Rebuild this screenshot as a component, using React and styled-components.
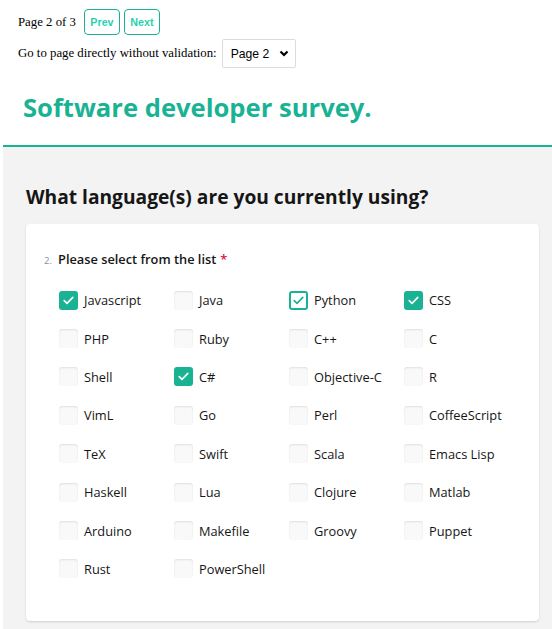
import React from 'react';
import styled, { createGlobalStyle } from 'styled-components';

const GREEN = '#19b394';

const languages = [
  { name: 'Javascript', state: 'checked' },
  { name: 'Java' },
  { name: 'Python', state: 'focused' },
  { name: 'CSS', state: 'checked' },
  { name: 'PHP' },
  { name: 'Ruby' },
  { name: 'C++' },
  { name: 'C' },
  { name: 'Shell' },
  { name: 'C#', state: 'checked' },
  { name: 'Objective-C' },
  { name: 'R' },
  { name: 'VimL' },
  { name: 'Go' },
  { name: 'Perl' },
  { name: 'CoffeeScript' },
  { name: 'TeX' },
  { name: 'Swift' },
  { name: 'Scala' },
  { name: 'Emacs Lisp' },
  { name: 'Haskell' },
  { name: 'Lua' },
  { name: 'Clojure' },
  { name: 'Matlab' },
  { name: 'Arduino' },
  { name: 'Makefile' },
  { name: 'Groovy' },
  { name: 'Puppet' },
  { name: 'Rust' },
  { name: 'PowerShell' },
];

const GlobalStyle = createGlobalStyle`
  body {
    margin: 0;
    background: #fff;
    font-family: "Liberation Serif", "Times New Roman", serif;
    font-size: 12.8px;
  }
`;

const Pager = styled.div`
  padding: 9px 0 0 18px;
`;

const PagerRow = styled.div`
  display: flex;
  align-items: center;
  gap: ${(p) => p.gap || 4}px;
  margin-top: ${(p) => p.top || 0}px;
  color: #000;
`;

const PagerLabel = styled.span`
  margin-right: ${(p) => p.space || 0}px;
`;

const NavButton = styled.button`
  width: 36px;
  height: 26px;
  padding: 0;
  background: #fff;
  border: 1px solid ${GREEN};
  border-radius: 4px;
  color: #1fd3b0;
  font-family: "Liberation Sans", Arial, sans-serif;
  font-weight: bold;
  font-size: 10.7px;
`;

const SelectBox = styled.div`
  width: 74px;
  height: 29px;
  box-sizing: border-box;
  border: 1px solid #dcdcdc;
  border-radius: 2px;
  display: flex;
  align-items: center;
  justify-content: space-between;
  padding: 0 6px 0 8px;
  font-family: "Liberation Sans", Arial, sans-serif;
  font-size: 12.2px;
  color: #000;
`;

const Survey = styled.div`
  margin: 3px 0 0 3px;
  font-family: "Open Sans", sans-serif;
`;

const Header = styled.div`
  padding: 21px 20px 21px;
  border-bottom: 2px solid ${GREEN};
  background: #fff;
`;

const Title = styled.h1`
  margin: 0;
  font-size: 25.6px;
  line-height: 32px;
  font-weight: 700;
  color: ${GREEN};
`;

const Body = styled.div`
  background: #f3f3f3;
  padding: 38px 13px 9px 23px;
`;

const PageTitle = styled.h2`
  margin: 0 0 15px;
  font-size: 19.2px;
  line-height: 24px;
  font-weight: 700;
  color: #161616;
`;

const Card = styled.div`
  background: #fff;
  border-radius: 4px;
  box-shadow: 0 1px 2px rgba(0, 0, 0, 0.15);
  padding: 27px 20px 33px 18px;
`;

const QuestionHeader = styled.div`
  display: flex;
  align-items: baseline;
  gap: 6px;
  line-height: 16px;
  margin-bottom: 12px;
`;

const QuestionNumber = styled.span`
  font-size: 9.6px;
  color: #909090;
`;

const QuestionText = styled.span`
  font-size: 12.8px;
  font-weight: 600;
  color: #161616;
`;

const Required = styled.span`
  color: #e60a3e;
  margin-left: 4px;
`;

const Grid = styled.div`
  display: grid;
  grid-template-columns: repeat(4, 115px);
  grid-auto-rows: 38.4px;
  padding-left: 15px;
`;

const Item = styled.label`
  display: flex;
  align-items: center;
  gap: 6px;
  font-size: 12.8px;
  color: #161616;
`;

const Box = styled.span`
  width: 19px;
  height: 19px;
  box-sizing: border-box;
  border-radius: 3px;
  display: flex;
  align-items: center;
  justify-content: center;
  flex-shrink: 0;
  background: ${(p) => (p.state === 'checked' ? GREEN : p.state === 'focused' ? '#fff' : '#f9f9f9')};
  border: ${(p) => (p.state === 'focused' ? `2px solid ${GREEN}` : 'none')};
  box-shadow: ${(p) => (p.state ? 'none' : 'inset 0 1px 2px rgba(0, 0, 0, 0.1)')};
`;

const Check = ({ color }) => (
  <svg width="11" height="9" viewBox="0 0 11 9" fill="none">
    <polyline points="1.2,4.6 4,7.4 9.8,1.4" stroke={color} strokeWidth="1.6" strokeLinecap="round" strokeLinejoin="round" />
  </svg>
);

const Chevron = () => (
  <svg width="10" height="7" viewBox="0 0 10 7">
    <polyline points="1.5,1.5 5,5 8.5,1.5" fill="none" stroke="#000" strokeWidth="2.2" />
  </svg>
);

export default function App() {
  return (
    <>
      <GlobalStyle />
      <Pager>
        <PagerRow>
          <PagerLabel space={4}>Page 2 of 3</PagerLabel>
          <NavButton>Prev</NavButton>
          <NavButton>Next</NavButton>
        </PagerRow>
        <PagerRow top={4} gap={5}>
          <PagerLabel>Go to page directly without validation:</PagerLabel>
          <SelectBox>
            Page 2
            <Chevron />
          </SelectBox>
        </PagerRow>
      </Pager>
      <Survey>
        <Header>
          <Title>Software developer survey.</Title>
        </Header>
        <Body>
          <PageTitle>What language(s) are you currently using?</PageTitle>
          <Card>
            <QuestionHeader>
              <QuestionNumber>2.</QuestionNumber>
              <QuestionText>
                Please select from the list<Required>*</Required>
              </QuestionText>
            </QuestionHeader>
            <Grid>
              {languages.map((lang) => (
                <Item key={lang.name}>
                  <Box state={lang.state}>
                    {lang.state === 'checked' && <Check color="#fff" />}
                    {lang.state === 'focused' && <Check color={GREEN} />}
                  </Box>
                  {lang.name}
                </Item>
              ))}
            </Grid>
          </Card>
        </Body>
      </Survey>
    </>
  );
}
